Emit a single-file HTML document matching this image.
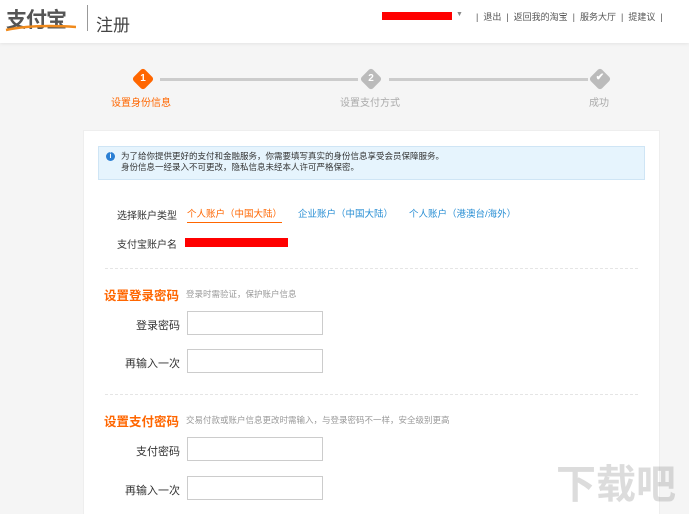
<!DOCTYPE html><html><head><meta charset="utf-8"><style>
*{margin:0;padding:0;box-sizing:border-box}
html,body{width:689px;height:514px;overflow:hidden}
body{background:#f5f5f5;font-family:"Liberation Sans","Noto Sans CJK SC",sans-serif;position:relative;font-size:11px;color:#333}
.a{position:absolute;white-space:nowrap}
.hd{position:absolute;left:0;top:0;width:689px;height:43px;background:#fff;box-shadow:0 1px 3px #e4e4e4}
.card{position:absolute;left:83px;top:130px;width:577px;height:384px;background:#fff;border:1px solid #eee;border-bottom:none}
.inp{position:absolute;width:136px;height:24px;border:1px solid #ccc;background:#fff}
.lbl{position:absolute;width:80px;text-align:right;font-size:11px;color:#333}
.dia{position:absolute;width:16px;height:16px;transform:rotate(45deg);border-radius:3px}
.dn{position:absolute;width:22px;text-align:center;color:#fff;font-size:10px;font-weight:bold}
.ln{position:absolute;height:3px;background:#ccc;top:78px}
.dash{position:absolute;left:105px;width:533px;border-top:1px dashed #e5e5e5}
</style></head><body>
<div class="hd"></div>
<div class="a" style="left:6px;top:4px;font-size:21px;font-weight:bold;color:#555;letter-spacing:-1px">支付宝</div>
<svg class="a" style="left:4px;top:20px" width="72" height="12"><path d="M2 10 Q30 4 72 7" stroke="#f08a1c" stroke-width="2.5" fill="none"/></svg>
<div class="a" style="left:87px;top:5px;width:1px;height:26px;background:#999"></div>
<div class="a" style="left:96px;top:11px;font-size:17px;color:#444">注册</div>
<div class="a" style="left:382px;top:12px;width:70px;height:8px;background:#f00"></div>
<div class="a" style="left:456px;top:11px;font-size:7px;color:#888">▼</div>
<div class="a" style="left:476px;top:10px;font-size:9px;color:#555">| &nbsp;退出 &nbsp;| &nbsp;返回我的淘宝 &nbsp;| &nbsp;服务大厅 &nbsp;| &nbsp;提建议 &nbsp;|</div>

<div class="dia" style="left:135px;top:71px;background:#f60"></div><div class="dn a" style="left:132px;top:73px">1</div>
<div class="ln" style="left:160px;width:198px"></div>
<div class="dia" style="left:363px;top:71px;background:#bbb"></div><div class="dn a" style="left:360px;top:73px">2</div>
<div class="ln" style="left:389px;width:199px"></div>
<div class="dia" style="left:592px;top:71px;background:#bbb"></div><div class="dn a" style="left:589px;top:72px">✔</div>
<div class="a" style="left:111px;top:94px;font-size:10px;color:#f60">设置身份信息</div>
<div class="a" style="left:340px;top:94px;font-size:10px;color:#aaa">设置支付方式</div>
<div class="a" style="left:589px;top:94px;font-size:10px;color:#aaa">成功</div>

<div class="card"></div>
<div class="a" style="left:98px;top:146px;width:547px;height:34px;background:#e6f4fd;border:1px solid #cfe5f5"></div>
<div class="a" style="left:106px;top:152px;width:9px;height:9px;border-radius:50%;background:#2a7fd4;color:#fff;font-size:7px;text-align:center;line-height:9px;font-weight:bold">i</div>
<div class="a" style="left:121px;top:151px;font-size:8.5px;line-height:11px;color:#333">为了给你提供更好的支付和金融服务，你需要填写真实的身份信息享受会员保障服务。<br>身份信息一经录入不可更改，隐私信息未经本人许可严格保密。</div>

<div class="a" style="left:117px;top:207px;font-size:10px">选择账户类型</div>
<div class="a" style="left:187px;top:206px;font-size:9.5px;color:#f60;border-bottom:1px solid #f60;padding-bottom:2px">个人账户（中国大陆）</div>
<div class="a" style="left:298px;top:206px;font-size:9.5px;color:#2a8fd4">企业账户（中国大陆）</div>
<div class="a" style="left:409px;top:206px;font-size:9.5px;color:#2a8fd4">个人账户（港澳台/海外）</div>
<div class="a" style="left:117px;top:236px;font-size:10px">支付宝账户名</div>
<div class="a" style="left:185px;top:238px;width:103px;height:9px;background:#f00"></div>
<div class="dash" style="top:268px"></div>
<div class="a" style="left:104px;top:285px;font-size:12.5px;font-weight:bold;color:#f60">设置登录密码</div>
<div class="a" style="left:186px;top:288px;font-size:8.5px;color:#999">登录时需验证，保护账户信息</div>
<div class="lbl" style="left:100px;top:317px">登录密码</div><div class="inp" style="left:187px;top:311px"></div>
<div class="lbl" style="left:100px;top:355px">再输入一次</div><div class="inp" style="left:187px;top:349px"></div>
<div class="dash" style="top:394px"></div>
<div class="a" style="left:104px;top:411px;font-size:12.5px;font-weight:bold;color:#f60">设置支付密码</div>
<div class="a" style="left:186px;top:414px;font-size:8.5px;color:#999">交易付款或账户信息更改时需输入，与登录密码不一样，安全级别更高</div>
<div class="lbl" style="left:100px;top:443px">支付密码</div><div class="inp" style="left:187px;top:437px"></div>
<div class="lbl" style="left:100px;top:482px">再输入一次</div><div class="inp" style="left:187px;top:476px"></div>
<div class="a" style="left:556px;top:452px;font-size:40px;font-weight:bold;color:rgba(140,140,140,.3)">下载吧</div>
</body></html>
